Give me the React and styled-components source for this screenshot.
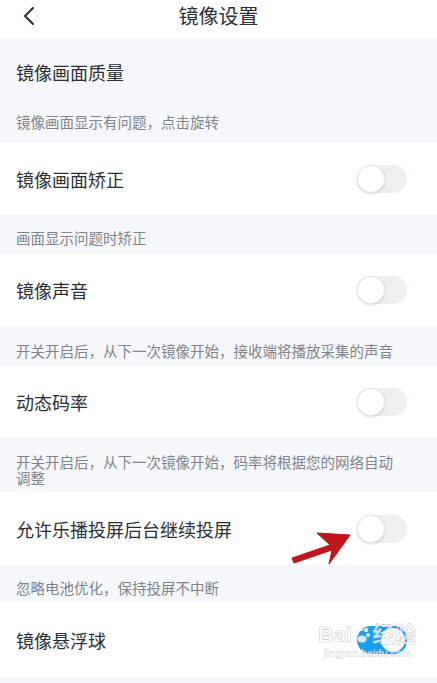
import React from "react";
import styled, { createGlobalStyle } from "styled-components";

const Global = createGlobalStyle`
  html, body { margin: 0; padding: 0; background: #f5f7fa; }
  body { font-family: "Noto Sans CJK SC", "Noto Sans", sans-serif; }
`;

const Page = styled.div`
  position: relative;
  width: 437px;
  min-height: 683px;
  background: #f5f7fa;
  overflow: hidden;
`;

const Header = styled.header`
  height: 38px;
  background: #ffffff;
  display: grid;
  grid-template-columns: 1fr auto 1fr;
  align-items: center;
`;

const Back = styled.div`
  padding-left: 22px;
  display: flex;
  align-items: center;
  height: 38px;
  padding-bottom: 6px;
  box-sizing: border-box;
`;

const Title = styled.h1`
  margin: 0;
  font-size: 20px;
  font-weight: 400;
  color: #2b2f36;
  line-height: 24px;
  padding-bottom: 6px;
`;

const Row = styled.div`
  height: ${(p) => p.$h}px;
  box-sizing: border-box;
  padding: ${(p) => p.$pt || 0}px 30px 0 16px;
  background: ${(p) => (p.$gray ? "#f5f7fa" : "#ffffff")};
  display: flex;
  align-items: center;
  justify-content: space-between;
  position: relative;
`;

const Label = styled.span`
  font-size: 18px;
  color: #2b2f36;
  line-height: 24px;
`;

const Hint = styled.div`
  background: #f5f7fa;
  padding: ${(p) => p.$top}px 36px ${(p) => p.$bottom}px 16px;
  font-size: 14.5px;
  line-height: 16px;
  color: #80848c;
`;

const Track = styled.div`
  width: 50px;
  height: 28px;
  border-radius: 14px;
  box-sizing: border-box;
  background: ${(p) => (p.$on ? "#1a9ef0" : "#eeeff1")};
  display: flex;
  align-items: center;
  justify-content: ${(p) => (p.$on ? "flex-end" : "flex-start")};
`;

const Knob = styled.div`
  width: 28px;
  height: 28px;
  border-radius: 50%;
  box-sizing: border-box;
  background: #ffffff;
  border: ${(p) => (p.$on ? "2px solid #1a9ef0" : "1px solid #e8e8e8")};
  box-shadow: 0 1px 3px rgba(0, 0, 0, 0.15);
`;

const Arrow = styled.svg`
  position: absolute;
  left: 286px;
  top: 527px;
  width: 70px;
  height: 40px;
`;

const Watermark = styled.div`
  position: absolute;
  left: 318px;
  top: 622px;
  display: flex;
  flex-direction: column;
  align-items: center;
  pointer-events: none;
  font-family: "Liberation Sans", "Noto Sans CJK SC", sans-serif;
`;

const MarkTop = styled.div`
  display: flex;
  align-items: center;
  font-size: 22px;
  font-weight: 700;
  color: rgba(255, 255, 255, 0.75);
  -webkit-text-stroke: 0.6px rgba(150, 150, 150, 0.5);
  line-height: 26px;
`;

const MarkBottom = styled.div`
  font-size: 10px;
  font-weight: 700;
  color: rgba(255, 255, 255, 0.8);
  -webkit-text-stroke: 0.4px rgba(160, 160, 160, 0.5);
  line-height: 12px;
`;

const Toggle = ({ on }) => (
  <Track $on={on}>
    <Knob $on={on} />
  </Track>
);

export default function App() {
  return (
    <Page>
      <Global />
      <Header>
        <Back>
          <svg width="14" height="20" viewBox="0 0 14 20">
            <path d="M11 2 L3 10 L11 18" fill="none" stroke="#2b2f36" strokeWidth="2" strokeLinecap="round" strokeLinejoin="round" />
          </svg>
        </Back>
        <Title>镜像设置</Title>
        <div />
      </Header>

      <Row $h={62} $pt={6} $gray>
        <Label>镜像画面质量</Label>
      </Row>
      <Hint $top={14} $bottom={13}>镜像画面显示有问题，点击旋转</Hint>

      <Row $h={72}>
        <Label>镜像画面矫正</Label>
        <Toggle />
      </Row>
      <Hint $top={15} $bottom={8}>画面显示问题时矫正</Hint>

      <Row $h={72}>
        <Label>镜像声音</Label>
        <Toggle />
      </Row>
      <Hint $top={17} $bottom={7}>开关开启后，从下一次镜像开始，接收端将播放采集的声音</Hint>

      <Row $h={71}>
        <Label>动态码率</Label>
        <Toggle />
      </Row>
      <Hint $top={17} $bottom={6}>开关开启后，从下一次镜像开始，码率将根据您的网络自动调整</Hint>

      <Row $h={73}>
        <Label>允许乐播投屏后台继续投屏</Label>
        <Toggle />
      </Row>
      <Hint $top={15} $bottom={6}>忽略电池优化，保持投屏不中断</Hint>

      <Row $h={75}>
        <Label>镜像悬浮球</Label>
        <Toggle on />
      </Row>

      <Arrow viewBox="0 0 70 40">
        <path d="M6 31 L44 18 L31 6 L64 8 L43 37 L46 23 L8 36 Z" fill="#c0161b" stroke="#c0161b" strokeWidth="1" strokeLinejoin="round" />
      </Arrow>

      <Watermark>
        <MarkTop>
          Bai
          <svg width="20" height="20" viewBox="0 0 20 20">
            <circle cx="5" cy="8" r="2.2" fill="rgba(255,255,255,0.8)" />
            <circle cx="9" cy="4" r="2.2" fill="rgba(255,255,255,0.8)" />
            <circle cx="14" cy="5" r="2.2" fill="rgba(255,255,255,0.8)" />
            <circle cx="16" cy="10" r="2" fill="rgba(255,255,255,0.8)" />
            <ellipse cx="10" cy="14" rx="4.5" ry="3.5" fill="rgba(255,255,255,0.8)" />
          </svg>
          经验
        </MarkTop>
        <MarkBottom>jingyan.baidu.com</MarkBottom>
      </Watermark>
    </Page>
  );
}
